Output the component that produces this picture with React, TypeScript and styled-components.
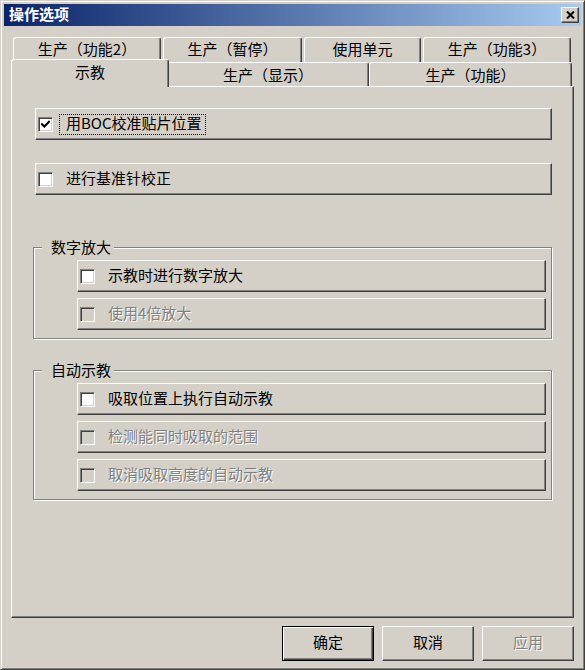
import React from 'react';
import styled, { createGlobalStyle, css } from 'styled-components';

const FONT = `"Noto Sans CJK SC", "Noto Sans", "DejaVu Sans", sans-serif`;

const GlobalStyle = createGlobalStyle`
  html, body { margin: 0; padding: 0; background: #d4d0c8; }
  body { font-family: ${FONT}; }
  * { box-sizing: border-box; }
`;

const raised = css`
  border-style: solid;
  border-width: 1px;
  border-color: #fff #404040 #404040 #fff;
  box-shadow: inset -1px -1px 0 #808080;
`;

const Window = styled.div`
  width: 585px;
  height: 670px;
  display: flex;
  flex-direction: column;
  background: #d4d0c8;
  border-style: solid;
  border-width: 1px;
  border-color: #d4d0c8 #404040 #404040 #d4d0c8;
  box-shadow: inset 1px 1px 0 #fff, inset -1px -1px 0 #808080;
  padding: 3px;
  font-family: ${FONT};
`;

const TitleBar = styled.div`
  height: 22px;
  flex: none;
  display: flex;
  align-items: center;
  justify-content: space-between;
  padding: 0 2px 0 5px;
  background: linear-gradient(to right, #0a246a, #a6caf0);
`;

const Title = styled.span`
  color: #fff;
  font-weight: 700;
  font-size: 15px;
  line-height: 20px;
  padding-bottom: 2px;
`;

const CloseButton = styled.div`
  width: 18px;
  height: 16px;
  display: flex;
  align-items: center;
  justify-content: center;
  background: #d4d0c8;
  ${raised}
`;

const Body = styled.div`
  flex: 1;
  display: flex;
  flex-direction: column;
  padding: 11px 7px 5px;
`;

const TabStrip = styled.div`
  height: 49px;
  flex: none;
  display: flex;
  flex-direction: column;
  position: relative;
  z-index: 1;
`;

const TabRow = styled.div<{ $h: number; $gap: number }>`
  height: ${(p) => p.$h}px;
  display: flex;
  align-items: flex-end;
  gap: ${(p) => p.$gap}px;
  margin: 0 2px;
`;

const Tab = styled.div<{ $w: number; $pt: number; $pb: number; $active?: boolean }>`
  width: ${(p) => p.$w}px;
  height: 100%;
  flex: none;
  display: flex;
  align-items: center;
  justify-content: center;
  padding-top: ${(p) => p.$pt}px;
  padding-bottom: ${(p) => p.$pb}px;
  font-size: 15px;
  line-height: 18px;
  color: #000;
  white-space: nowrap;
  background: #d4d0c8;
  border-top: 1px solid #fff;
  border-left: 1px solid #fff;
  border-right: 1px solid #404040;
  border-radius: 3px 3px 0 0;
  box-shadow: inset -1px 0 0 #808080;
  ${(p) =>
    p.$active &&
    css`
      width: ${p.$w + 4}px;
      height: 28px;
      margin: 0 -2px -1px;
      padding-top: 0;
      padding-bottom: 4px;
      position: relative;
      z-index: 2;
    `}
`;

const Panel = styled.div`
  height: 532px;
  flex: none;
  display: flex;
  flex-direction: column;
  align-items: flex-start;
  padding: 21px 21px 0 23px;
  ${raised}
`;

const TopRows = styled.div`
  display: flex;
  flex-direction: column;
  gap: 23px;
`;

const CheckRow = styled.div<{ $w: number }>`
  width: ${(p) => p.$w}px;
  height: 32px;
  flex: none;
  display: flex;
  align-items: center;
  padding-left: 2px;
  ${raised}
`;

const Box = styled.span<{ $disabled?: boolean }>`
  width: 15px;
  height: 15px;
  flex: none;
  display: flex;
  align-items: center;
  justify-content: center;
  background: ${(p) => (p.$disabled ? '#d4d0c8' : '#fff')};
  border-style: solid;
  border-width: 1px;
  border-color: #808080 #fff #fff #808080;
  box-shadow: inset 1px 1px 0 #404040, inset -1px -1px 0 #d4d0c8;
`;

const Label = styled.span<{ $focus?: boolean; $disabled?: boolean }>`
  margin-left: 6px;
  padding: 0 3px 3px 6px;
  border: 1px dotted ${(p) => (p.$focus ? '#000' : 'transparent')};
  font-size: 15px;
  line-height: 16px;
  white-space: nowrap;
  color: ${(p) => (p.$disabled ? '#808080' : '#000')};
  text-shadow: ${(p) => (p.$disabled ? '1px 1px 0 #fff' : 'none')};
`;

const Group = styled.div<{ $mt: number }>`
  position: relative;
  width: 519px;
  margin-left: -2px;
  margin-top: ${(p) => p.$mt}px;
  border: 1px solid #808080;
  box-shadow: inset 1px 1px 0 #fff, 1px 1px 0 #fff;
  padding: 12px 0 8px 43px;
  display: flex;
  flex-direction: column;
  gap: 6px;
`;

const Legend = styled.span`
  position: absolute;
  left: 8px;
  top: -10px;
  padding: 0 3px 1px 9px;
  background: #d4d0c8;
  font-size: 15px;
  line-height: 17px;
  color: #000;
  white-space: nowrap;
`;

const ButtonBar = styled.div`
  display: flex;
  justify-content: flex-end;
  gap: 8px;
  margin-top: 8px;
`;

const Button = styled.button<{ $default?: boolean; $disabled?: boolean }>`
  width: 92px;
  height: 35px;
  padding: 0 0 4px;
  background: #d4d0c8;
  font-family: ${FONT};
  font-size: 15px;
  line-height: 18px;
  color: ${(p) => (p.$disabled ? '#808080' : '#000')};
  text-shadow: ${(p) => (p.$disabled ? '1px 1px 0 #fff' : 'none')};
  ${(p) =>
    p.$default
      ? css`
          border: 1px solid #000;
          box-shadow: inset 1px 1px 0 #fff, inset -1px -1px 0 #404040, inset -2px -2px 0 #808080;
        `
      : raised}
`;

const Check = () => (
  <svg width="9" height="9" viewBox="0 0 9 9">
    <polyline points="1,4.2 3.4,6.6 8,1.8" fill="none" stroke="#000" strokeWidth="2.1" strokeLinecap="square" />
  </svg>
);

const CloseX = () => (
  <svg width="9" height="8" viewBox="0 0 9 8">
    <path d="M1 0.5 L8 7.5 M8 0.5 L1 7.5" stroke="#000" strokeWidth="2" />
  </svg>
);

type Item = { text: string; checked?: boolean; disabled?: boolean; focus?: boolean };

const Row = ({ item, w }: { item: Item; w: number }) => (
  <CheckRow $w={w}>
    <Box $disabled={item.disabled}>{item.checked && <Check />}</Box>
    <Label $focus={item.focus} $disabled={item.disabled}>
      {item.text}
    </Label>
  </CheckRow>
);

const row1 = [
  { label: '生产（功能2）', w: 148 },
  { label: '生产（暂停）', w: 139 },
  { label: '使用单元', w: 117 },
  { label: '生产（功能3）', w: 148 },
];

const row2 = [
  { label: '示教', w: 154, active: true },
  { label: '生产（显示）', w: 202 },
  { label: '生产（功能）', w: 203 },
];

const topItems: Item[] = [
  { text: '用BOC校准贴片位置', checked: true, focus: true },
  { text: '进行基准针校正' },
];

const groups: { title: string; mt: number; items: Item[] }[] = [
  {
    title: '数字放大',
    mt: 52,
    items: [{ text: '示教时进行数字放大' }, { text: '使用4倍放大', disabled: true }],
  },
  {
    title: '自动示教',
    mt: 31,
    items: [
      { text: '吸取位置上执行自动示教' },
      { text: '检测能同时吸取的范围', disabled: true },
      { text: '取消吸取高度的自动示教', disabled: true },
    ],
  },
];

export default function App() {
  return (
    <>
      <GlobalStyle />
      <Window>
        <TitleBar>
          <Title>操作选项</Title>
          <CloseButton>
            <CloseX />
          </CloseButton>
        </TitleBar>
        <Body>
          <TabStrip>
            <TabRow $h={25} $gap={2}>
              {row1.map((t) => (
                <Tab key={t.label} $w={t.w} $pt={0} $pb={3}>
                  {t.label}
                </Tab>
              ))}
            </TabRow>
            <TabRow $h={24} $gap={0}>
              {row2.map((t) => (
                <Tab key={t.label} $w={t.w} $pt={1} $pb={1} $active={t.active}>
                  {t.label}
                </Tab>
              ))}
            </TabRow>
          </TabStrip>
          <Panel>
            <TopRows>
              {topItems.map((it) => (
                <Row key={it.text} item={it} w={517} />
              ))}
            </TopRows>
            {groups.map((g) => (
              <Group key={g.title} $mt={g.mt}>
                <Legend>{g.title}</Legend>
                {g.items.map((it) => (
                  <Row key={it.text} item={it} w={469} />
                ))}
              </Group>
            ))}
          </Panel>
          <ButtonBar>
            <Button $default>确定</Button>
            <Button>取消</Button>
            <Button $disabled>应用</Button>
          </ButtonBar>
        </Body>
      </Window>
    </>
  );
}
